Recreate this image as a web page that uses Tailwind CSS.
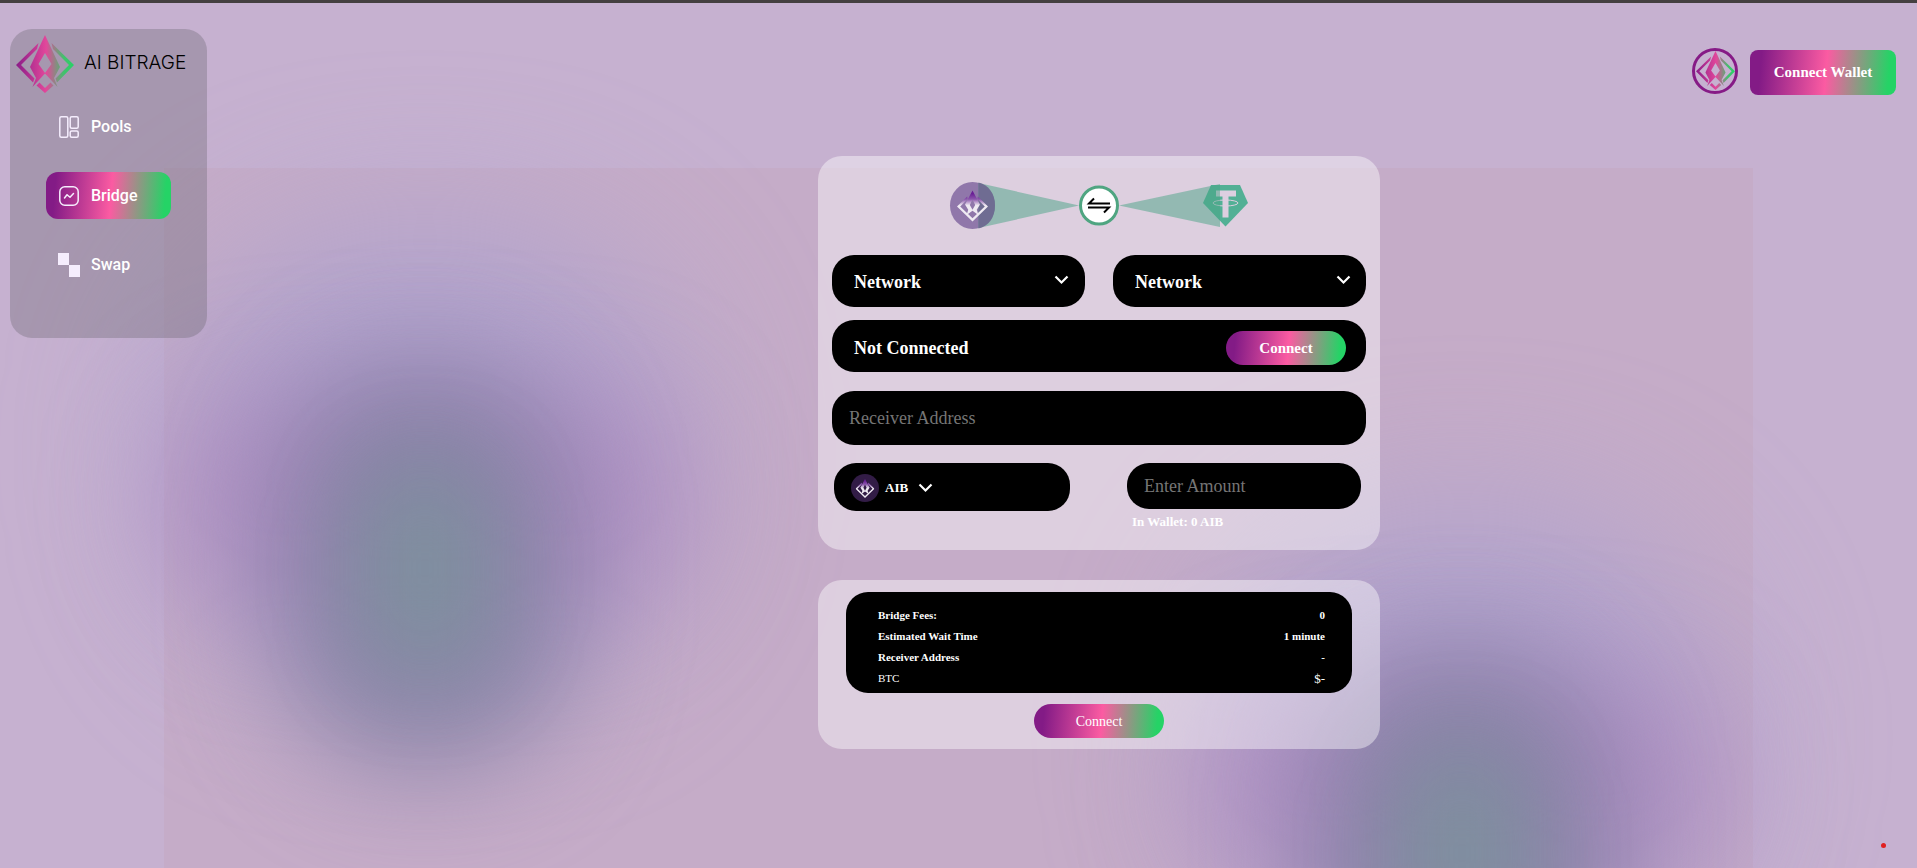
<!DOCTYPE html>
<html lang="en">
<head>
<meta charset="utf-8">
<meta name="viewport" content="width=device-width, initial-scale=1">
<title>AI Bitrage – Bridge</title>
<script src="https://cdn.jsdelivr.net/npm/@tailwindcss/browser@4"></script>
</head>
<body class="relative min-h-screen overflow-hidden border-t-3 border-[#444040] bg-[#c6b1d0] font-['Liberation_Serif',serif]">

<svg class="absolute size-0" aria-hidden="true">
  <defs>
    <linearGradient id="brand" gradientUnits="userSpaceOnUse" x1="0" y1="0" x2="58" y2="0">
      <stop offset="0" stop-color="#8a1c88"/><stop offset=".52" stop-color="#e2479b"/><stop offset=".82" stop-color="#43c06d"/><stop offset="1" stop-color="#25d366"/>
    </linearGradient>
    <linearGradient id="tip" gradientUnits="userSpaceOnUse" x1="0" y1="0" x2="0" y2="58">
      <stop offset=".1" stop-color="#6a1f96"/><stop offset=".28" stop-color="#8a55ab"/><stop offset=".48" stop-color="#efeaf2"/><stop offset="1" stop-color="#efeaf2"/>
    </linearGradient>
    <symbol id="mark" viewBox="0 0 58 58">
      <path fill-rule="evenodd" d="M29 0 14 32 20 43 16.500 52 29 38.500 41.500 52 38 43 44 32ZM29 18 35.500 29 29 38 22.500 29Z"/>
      <path d="M22.500 8 0 30 17 47.500 18.500 43.500 5 30 21 14ZM35.500 8 58 30 41 47.500 39.500 43.500 53 30 37 14ZM23.500 47.500 29 53 34.500 47.500 37.500 50.500 29 58 20.500 50.500Z"/>
    </symbol>
    <symbol id="coin" viewBox="0 0 58 58">
      <path fill-rule="evenodd" d="M29 0 15 26 21 36 18 46 29 38 40 46 37 36 43 26ZM29 17 34 27 29 36 24 27Z"/>
      <path d="M19 11 0 30 29 58 58 30 39 11 38 16 52 30 29 52 6 30 20 16Z"/>
    </symbol>
  </defs>
</svg>

<!-- Ambient background glow -->
<div class="pointer-events-none absolute inset-0 overflow-hidden" aria-hidden="true">
  <div class="absolute inset-x-[164px] top-[165px] bottom-0 bg-[#c5acc8]"></div>
  <div class="absolute top-[130px] left-[55px] h-[740px] w-[740px]">
    <div class="absolute top-[90px] left-[110px] h-[460px] w-[520px] rounded-full bg-[#aaa0cf]/75 blur-[75px]"></div>
    <div class="absolute top-[255px] left-[110px] h-[230px] w-[520px] rounded-full bg-[#aa80bd]/60 blur-[60px]"></div>
    <div class="absolute top-[230px] left-[225px] h-[410px] w-[290px] rounded-full bg-[#8580a3]/85 blur-[55px]"></div>
    <div class="absolute top-[330px] left-[305px] h-[210px] w-[130px] rounded-full bg-[#779797]/60 blur-[45px]"></div>
  </div>
  <div class="absolute top-[415px] left-[1092px] h-[740px] w-[740px]">
    <div class="absolute top-[90px] left-[110px] h-[460px] w-[520px] rounded-full bg-[#aaa0cf]/75 blur-[75px]"></div>
    <div class="absolute top-[255px] left-[110px] h-[230px] w-[520px] rounded-full bg-[#aa80bd]/60 blur-[60px]"></div>
    <div class="absolute top-[230px] left-[225px] h-[410px] w-[290px] rounded-full bg-[#8580a3]/85 blur-[55px]"></div>
    <div class="absolute top-[330px] left-[305px] h-[210px] w-[130px] rounded-full bg-[#779797]/60 blur-[45px]"></div>
  </div>
</div>

<div class="relative flex items-start">
  <aside class="mt-[26px] ml-[10px] h-[309px] w-[197px] shrink-0 rounded-[22px] bg-[#6f6975]/36 text-white">
    <a href="#" class="flex items-center gap-[10px] pt-[6px] pl-[6px] font-['Inter',sans-serif] text-[19px] font-light text-black">
      <svg class="size-[58px]" fill="url(#brand)" aria-hidden="true"><use href="#mark"/></svg>
      <span class="pb-[2px]">AI BITRAGE</span>
    </a>
    <nav class="mt-[10px] ml-[36px] flex w-[125px] flex-col gap-[22px] font-['Roboto',sans-serif] text-[16px] font-medium">
      <a href="#" class="flex h-[47px] items-center gap-3 pl-[13px]">
        <svg class="h-[22px] w-[20px]" viewBox="0 0 20 22" fill="none" stroke="#f5edfd" stroke-width="1.500" aria-hidden="true"><rect x=".8" y=".8" width="8" height="20.400" rx="1.500"/><rect x="11.200" y=".8" width="8" height="11.500" rx="1.500"/><rect x="11.200" y="15" width="8" height="6.200" rx="1.500"/></svg>
        Pools
      </a>
      <a href="#" aria-current="page" class="flex h-[47px] items-center gap-3 rounded-[12px] bg-linear-[95deg,#831b86_8%,#fb5ba2_52%,#25d366_94%] pl-[13px]">
        <svg class="size-[20px]" viewBox="0 0 20 20" fill="none" stroke="#f5edfd" stroke-width="1.500" stroke-linecap="round" stroke-linejoin="round" aria-hidden="true"><rect x=".8" y=".8" width="18.400" height="18.400" rx="5"/><path d="M5.500 12 8 8.700 11 11.300 14.500 7.500"/></svg>
        Bridge
      </a>
      <a href="#" class="flex h-[47px] items-center gap-[11px] pl-3">
        <svg class="h-[24px] w-[22px]" viewBox="0 0 22 24" fill="#f5edfd" aria-hidden="true"><path d="M0 0h11v12H0zM11 12h11v12H11z"/></svg>
        Swap
      </a>
    </nav>
  </aside>

  <div class="min-w-0 flex-1">
    <header class="flex items-center justify-end gap-3 pt-[43px] pr-[21px]">
      <a href="#" aria-label="Account" class="flex size-[46px] items-center justify-center rounded-full border-3 border-[#861b86]">
        <svg class="size-[39px]" fill="url(#brand)" aria-hidden="true"><use href="#mark"/></svg>
      </a>
      <button type="button" class="mt-[4px] h-[45px] w-[146px] rounded-[8px] bg-linear-[95deg,#831b86_8%,#fb5ba2_52%,#25d366_94%] text-[15px] font-bold text-white">Connect Wallet</button>
    </header>

    <main class="flex flex-col items-center gap-[30px] pt-[61px] pl-[74px]">
      <form class="h-[394px] w-[562px] rounded-[24px] bg-white/42 px-[14px] pt-[26px] font-bold text-white">
        <div class="flex justify-center">
          <svg class="h-[48px] w-[300px]" viewBox="949 182 300 48" aria-hidden="true">
            <ellipse cx="972.500" cy="205.500" rx="22.500" ry="23.500" fill="#9077aa"/>
            <path d="M978.500 183 1079 205.500 978.500 228Z" fill="#4aa485" fill-opacity=".5"/>
            <path d="M978.500 182.500C989 185 995 194 995 205.500S989 226 978.500 228.500Z" fill="#6f6c92"/>
            <svg x="957" y="189" width="31" height="34" fill="url(#tip)"><use href="#coin"/></svg>
            <path d="M1211 185h29l8 18-22.500 23.500L1203 203Z" fill="#52b095"/>
            <path d="M1216 190.500h20v6h-7.500v21h-6v-21h-6.500Z" fill="#ddcfe0"/>
            <ellipse cx="1225.500" cy="203" rx="12.500" ry="3" fill="none" stroke="#ddcfe0" stroke-width="1"/>
            <path d="M1119 205.500 1220 184V227Z" fill="#4aa485" fill-opacity=".5"/>
            <circle cx="1099" cy="205.500" r="18.500" fill="#fff" stroke="#4fa581" stroke-width="3"/>
            <path d="M1110 203.500H1089L1094 198.500M1088 207.500H1109L1104 212.500" fill="none" stroke="#000" stroke-width="2"/>
          </svg>
        </div>

        <div class="mt-[25px] flex justify-between text-[18px]">
          <div class="relative w-[253px]">
            <select aria-label="From network" class="block h-[52px] w-full appearance-none rounded-[22px] bg-black pt-[2px] pl-[22px]"><option>Network</option></select>
            <svg class="pointer-events-none absolute top-[20px] right-[16px] h-[10px] w-[15px]" viewBox="0 0 15 10" fill="none" stroke="#fff" stroke-width="2.200" aria-hidden="true"><path d="M1.500 1.500 7.500 7.500 13.500 1.500"/></svg>
          </div>
          <div class="relative w-[253px]">
            <select aria-label="To network" class="block h-[52px] w-full appearance-none rounded-[22px] bg-black pt-[2px] pl-[22px]"><option>Network</option></select>
            <svg class="pointer-events-none absolute top-[20px] right-[15px] h-[10px] w-[15px]" viewBox="0 0 15 10" fill="none" stroke="#fff" stroke-width="2.200" aria-hidden="true"><path d="M1.500 1.500 7.500 7.500 13.500 1.500"/></svg>
          </div>
        </div>

        <div class="mt-[13px] flex h-[52px] items-center justify-between rounded-[22px] bg-black pr-5 pl-[22px] text-[18px]">
          <span class="pt-1">Not Connected</span>
          <button type="button" class="mt-1 h-[34px] w-[120px] rounded-[17px] bg-linear-[95deg,#831b86_8%,#fb5ba2_52%,#25d366_94%] text-[15px]">Connect</button>
        </div>

        <input type="text" aria-label="Receiver Address" placeholder="Receiver Address" class="mt-[19px] block h-[54px] w-full rounded-[22px] bg-black px-[17px] text-[18px] font-normal placeholder:text-[#757575]">

        <div class="mt-[18px] flex items-start justify-between pr-[5px] pl-[2px]">
          <button type="button" class="flex h-[48px] w-[236px] items-center rounded-[22px] bg-black pt-[2px] pl-[17px] text-[13px]">
            <svg class="size-[28px]" viewBox="0 0 28 28" aria-hidden="true"><circle cx="14" cy="14" r="14" fill="#321c46"/><svg x="4.500" y="4.500" width="19" height="20" fill="url(#tip)"><use href="#coin"/></svg></svg>
            <span class="ml-[6px]">AIB</span>
            <svg class="ml-[10px] h-[10px] w-[15px]" viewBox="0 0 15 10" fill="none" stroke="#fff" stroke-width="2.200" aria-hidden="true"><path d="M1.500 1.500 7.500 7.500 13.500 1.500"/></svg>
          </button>
          <div class="w-[234px]">
            <input type="text" aria-label="Enter Amount" placeholder="Enter Amount" class="block h-[46px] w-full rounded-[22px] bg-black px-[17px] text-[18px] font-normal placeholder:text-[#757575]">
            <p class="mt-[4px] pl-[5px] text-[13px] leading-[18px]">In Wallet: 0 AIB</p>
          </div>
        </div>
      </form>

      <section class="flex h-[169px] w-[562px] flex-col items-center rounded-[24px] bg-white/42 pt-3 text-white">
        <dl class="grid h-[101px] w-[506px] grid-cols-2 content-start rounded-[22px] bg-black pt-[13px] pr-[27px] pl-[32px] text-[11px] leading-[21px] font-bold">
          <dt>Bridge Fees:</dt><dd class="text-right">0</dd>
          <dt>Estimated Wait Time</dt><dd class="text-right">1 minute</dd>
          <dt>Receiver Address</dt><dd class="text-right">-</dd>
          <dt class="font-normal">BTC</dt><dd class="text-right text-[13px] font-normal">$-</dd>
        </dl>
        <button type="button" class="mt-[11px] h-[34px] w-[130px] rounded-[17px] bg-linear-[95deg,#831b86_8%,#fb5ba2_52%,#25d366_94%] text-[14px]">Connect</button>
      </section>
    </main>
  </div>
</div>

<div class="absolute right-[31px] bottom-[20px] size-[5px] rounded-full bg-[#e02020]" aria-hidden="true"></div>
</body>
</html>
